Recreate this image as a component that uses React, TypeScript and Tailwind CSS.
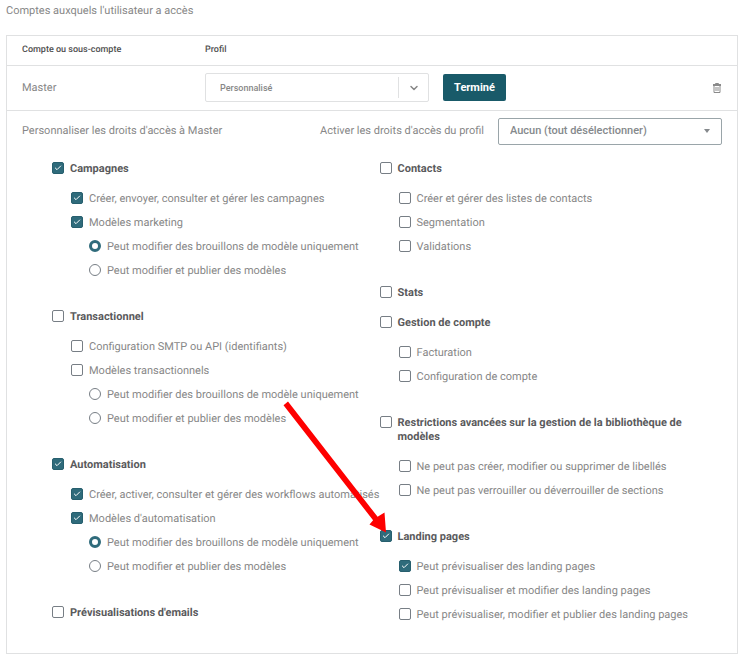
import { useId, type ReactNode } from 'react';
import { Check, ChevronDown } from 'lucide-react';

interface Option {
  label: string;
  checked?: boolean;
  choices?: { label: string; checked?: boolean }[];
}

interface Group {
  title: string;
  checked?: boolean;
  pointed?: boolean;
  options?: Option[];
}

const templateChoices = (draftOnly: boolean) => [
  { label: 'Peut modifier des brouillons de modèle uniquement', checked: draftOnly },
  { label: 'Peut modifier et publier des modèles' },
];

const leftGroups: Group[] = [
  {
    title: 'Campagnes',
    checked: true,
    options: [
      { label: 'Créer, envoyer, consulter et gérer les campagnes', checked: true },
      { label: 'Modèles marketing', checked: true, choices: templateChoices(true) },
    ],
  },
  {
    title: 'Transactionnel',
    options: [
      { label: 'Configuration SMTP ou API (identifiants)' },
      { label: 'Modèles transactionnels', choices: templateChoices(false) },
    ],
  },
  {
    title: 'Automatisation',
    checked: true,
    options: [
      { label: 'Créer, activer, consulter et gérer des workflows automatisés', checked: true },
      { label: "Modèles d'automatisation", checked: true, choices: templateChoices(true) },
    ],
  },
  { title: "Prévisualisations d'emails" },
];

const rightGroups: Group[] = [
  {
    title: 'Contacts',
    options: [
      { label: 'Créer et gérer des listes de contacts' },
      { label: 'Segmentation' },
      { label: 'Validations' },
    ],
  },
  { title: 'Stats' },
  {
    title: 'Gestion de compte',
    options: [{ label: 'Facturation' }, { label: 'Configuration de compte' }],
  },
  {
    title: 'Restrictions avancées sur la gestion de la bibliothèque de modèles',
    options: [
      { label: 'Ne peut pas créer, modifier ou supprimer de libellés' },
      { label: 'Ne peut pas verrouiller ou déverrouiller de sections' },
    ],
  },
  {
    title: 'Landing pages',
    checked: true,
    pointed: true,
    options: [
      { label: 'Peut prévisualiser des landing pages', checked: true },
      { label: 'Peut prévisualiser et modifier des landing pages' },
      { label: 'Peut prévisualiser, modifier et publier des landing pages' },
    ],
  },
];

function Checkbox({ id, checked, children }: { id: string; checked?: boolean; children?: ReactNode }) {
  return (
    <span className="relative mb-0.5 flex size-3 shrink-0">
      <input
        id={id}
        type="checkbox"
        defaultChecked={checked}
        className="peer size-3 appearance-none rounded-[2px] border border-[#777e85] bg-white checked:border-[#275f6e] checked:bg-[#2f6b7b]"
      />
      <Check
        className="pointer-events-none absolute inset-0 m-auto hidden size-2 text-white peer-checked:block"
        strokeWidth={3}
      />
      {children}
    </span>
  );
}

function Arrow() {
  return (
    <svg
      className="pointer-events-none absolute right-[5px] bottom-[9px] z-10 h-[132px] w-[104px] max-w-none"
      viewBox="0 0 104 132"
      fill="#fe0000"
      aria-hidden="true"
    >
      <path d="M0.5 4.2 L5 0.6 L94.6 115.8 L101.5 111.5 L103 131.5 L86.5 123.6 L90.1 119.3 Z" />
    </svg>
  );
}

function OptionRow({ option }: { option: Option }) {
  const id = useId();

  return (
    <li>
      <div className="flex h-6 items-center gap-1.5">
        <Checkbox id={id} checked={option.checked} />
        <label htmlFor={id} className="whitespace-nowrap">{option.label}</label>
      </div>
      {option.choices && (
        <ul className="pl-[18px]">
          {option.choices.map((choice, i) => (
            <li key={choice.label} className="flex h-6 items-center gap-1.5">
              <input
                id={`${id}-${i}`}
                name={id}
                type="radio"
                defaultChecked={choice.checked}
                className="mb-0.5 size-3 shrink-0 appearance-none rounded-full border border-[#777e85] bg-white checked:border-3 checked:border-[#2f6b7b]"
              />
              <label htmlFor={`${id}-${i}`} className="whitespace-nowrap">{choice.label}</label>
            </li>
          ))}
        </ul>
      )}
    </li>
  );
}

function PermissionGroup({ group }: { group: Group }) {
  const id = useId();

  return (
    <section className={group.options ? 'mb-[22px]' : 'mb-1.5'}>
      <div className="flex items-start gap-1.5 py-[5px]">
        <span className="flex h-3.5 items-center">
          <Checkbox id={id} checked={group.checked}>
            {group.pointed && <Arrow />}
          </Checkbox>
        </span>
        <label htmlFor={id} className="font-bold text-[#5a5a5c]">{group.title}</label>
      </div>
      {group.options && (
        <ul className="mt-1.5 pl-[19px]">
          {group.options.map((option) => (
            <OptionRow key={option.label} option={option} />
          ))}
        </ul>
      )}
    </section>
  );
}

function TrashIcon() {
  return (
    <svg className="h-2.5 w-2" viewBox="0 0 8 10" fill="none" stroke="#8a8a8a" strokeWidth="1" aria-hidden="true">
      <path d="M0 1.5H8M2.5 1.5V0.5H5.5V1.5M0 2.5H8M1 2V9.5H7V2M3 4V8M5 4V8" />
    </svg>
  );
}

export default function App() {
  return (
    <main className="bg-white px-[6px] pt-1 pb-1.5 font-[Roboto,sans-serif] text-[11px] leading-[14px] text-[#878787] [text-rendering:geometricPrecision]">
      <h1 className="mb-[17px]">Comptes auxquels l'utilisateur a accès</h1>

      <div className="border border-[#e0e1e2]">
        <table className="w-full">
          <thead>
            <tr className="h-[29px] border-b border-[#e0e1e2] text-left text-[9px] text-[#505050]">
              <th className="w-[198px] pl-[15px] font-medium">Compte ou sous-compte</th>
              <th className="font-medium" colSpan={2}>Profil</th>
            </tr>
          </thead>
          <tbody>
            <tr className="h-[45px] border-b border-[#e0e1e2]">
              <td className="pl-[15px]">Master</td>
              <td>
                <div className="flex items-center gap-3.5">
                  <div className="relative w-56">
                    <select
                      aria-label="Profil"
                      className="h-[29px] w-full appearance-none rounded-[2px] border border-[#e0e1e2] bg-white pl-3.5 text-[9px] font-medium"
                    >
                      <option>Personnalisé</option>
                    </select>
                    <span className="pointer-events-none absolute inset-y-1 right-0 flex w-[31px] items-center justify-center border-l border-[#e0e1e2]">
                      <ChevronDown className="size-3" strokeWidth={3} />
                    </span>
                  </div>
                  <button type="button" className="h-[27px] w-[63px] rounded-[2px] bg-[#195a69] font-bold text-white">
                    Terminé
                  </button>
                </div>
              </td>
              <td className="pr-4">
                <button type="button" aria-label="Supprimer" className="ml-auto block">
                  <TrashIcon />
                </button>
              </td>
            </tr>
          </tbody>
        </table>

        <div className="flex items-center justify-between px-[15px] pt-[7px]">
          <h2>Personnaliser les droits d'accès à Master</h2>
          <div className="flex items-center gap-3.5">
            <label htmlFor="profile-rights">Activer les droits d'accès du profil</label>
            <div className="relative w-56">
              <select
                id="profile-rights"
                className="h-[27px] w-full appearance-none rounded-[2px] border border-[#9aa5a9] bg-white pl-[11px] font-medium text-[#85898c]"
              >
                <option>Aucun (tout désélectionner)</option>
              </select>
              <span className="pointer-events-none absolute inset-y-0 right-3 flex items-center">
                <svg className="h-1 w-1.5" viewBox="0 0 6 4" fill="#85898c" aria-hidden="true">
                  <path d="M0 0H6L3 4Z" />
                </svg>
              </span>
            </div>
          </div>
        </div>

        <div className="grid grid-cols-2 pt-3 pr-[30px] pb-1 pl-[45px]">
          <div>
            {leftGroups.map((group) => (
              <PermissionGroup key={group.title} group={group} />
            ))}
          </div>
          <div className="pr-2.5">
            {rightGroups.map((group) => (
              <PermissionGroup key={group.title} group={group} />
            ))}
          </div>
        </div>
      </div>
    </main>
  );
}
